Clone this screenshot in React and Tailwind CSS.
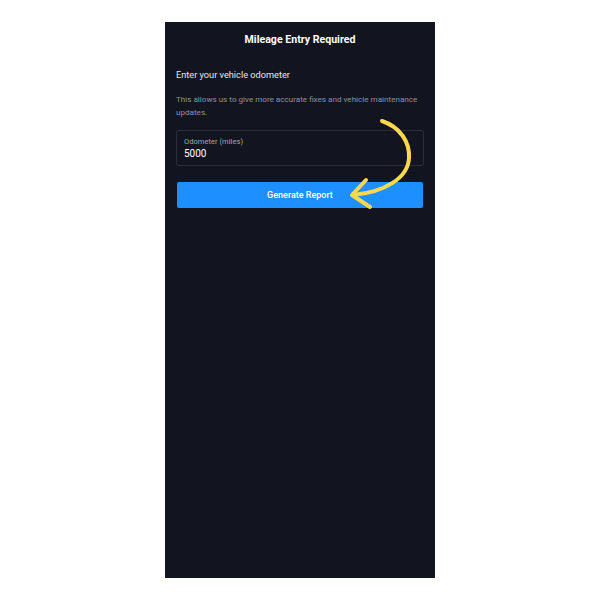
import React from "react";

export default function App() {
  return (
    <div className="w-[600px] h-[600px] bg-white flex justify-center pt-[22px]" style={{ fontFamily: "Roboto, 'Liberation Sans', sans-serif" }}>
      <div className="relative w-[270px] h-[556px] bg-[#121420] flex flex-col px-[11px]">
        <div className="h-[36px] flex items-center justify-center text-[10.6px] font-bold text-white">
          Mileage Entry Required
        </div>
        <div className="mt-[11px] text-[9.2px] leading-[12px] text-[#e6e7ec]">Enter your vehicle odometer</div>
        <div className="mt-[12px] text-[8.1px] leading-[13px] text-[#8e91a1]">
          This allows us to give more accurate fixes and vehicle maintenance updates.
        </div>
        <div className="mt-[11px] h-[36px] rounded-[3px] border border-[#2a2d3b] flex flex-col justify-center px-[7px]">
          <div className="text-[7.6px] leading-[10px] text-[#a3a6b4]">Odometer (miles)</div>
          <div className="text-[10px] leading-[13px] text-white">5000</div>
        </div>
        <div className="mt-[16px] mx-[1px] h-[26px] pt-[2px] rounded-[2px] bg-[#1e8fff] flex items-center justify-center text-[9px] font-medium text-white">
          Generate Report
        </div>
        <svg className="absolute left-0 top-0 pointer-events-none" width="270" height="556" viewBox="165 22 270 556">
          <path d="M382 121 C 400 127, 410 142, 409 158 C 408 178, 385 192, 353 195" fill="none" stroke="#fcd84c" strokeWidth="4" strokeLinecap="round" />
          <path d="M366 180 L352 195 L370 207" fill="none" stroke="#fcd84c" strokeWidth="4" strokeLinecap="round" strokeLinejoin="round" />
        </svg>
      </div>
    </div>
  );
}
